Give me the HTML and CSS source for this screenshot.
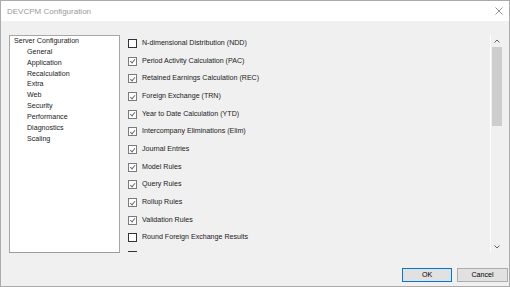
FILE: index.html
```html
<!DOCTYPE html>
<html lang="en">

<head>
    <meta charset="UTF-8">
    <title>DEVCPM Configuration</title>
    <link rel="stylesheet" href="styles.css">
</head>

<body>
    <div class="window">
        <div class="title-bar">
            <span class="title">DEVCPM Configuration</span>
            <svg class="close" width="8" height="8" viewBox="0 0 8 8">
                <path d="M0.5 0.5 L7.5 7.5 M7.5 0.5 L0.5 7.5" stroke="#8a8a8a" stroke-width="0.9" fill="none"/>
            </svg>
        </div>

        <div class="content">
            <div class="main">
                <ul class="tree">
                    <li class="root">Server Configuration</li>
                    <li>General</li>
                    <li>Application</li>
                    <li>Recalculation</li>
                    <li>Extra</li>
                    <li>Web</li>
                    <li>Security</li>
                    <li>Performance</li>
                    <li>Diagnostics</li>
                    <li>Scaling</li>
                </ul>

                <div class="panel">
                    <div class="options">
                        <label class="option"><span class="box"></span>N-dimensional Distribution (NDD)</label>
                        <label class="option"><span class="box checked"></span>Period Activity Calculation (PAC)</label>
                        <label class="option"><span class="box checked"></span>Retained Earnings Calculation (REC)</label>
                        <label class="option"><span class="box checked"></span>Foreign Exchange (TRN)</label>
                        <label class="option"><span class="box checked"></span>Year to Date Calculation (YTD)</label>
                        <label class="option"><span class="box checked"></span>Intercompany Eliminations (Elim)</label>
                        <label class="option"><span class="box checked"></span>Journal Entries</label>
                        <label class="option"><span class="box checked"></span>Model Rules</label>
                        <label class="option"><span class="box checked"></span>Query Rules</label>
                        <label class="option"><span class="box checked"></span>Rollup Rules</label>
                        <label class="option"><span class="box checked"></span>Validation Rules</label>
                        <label class="option"><span class="box"></span>Round Foreign Exchange Results</label>
                        <label class="option"><span class="box"></span>Use Cell Text</label>
                    </div>

                    <div class="scrollbar">
                        <svg class="arrow" width="6" height="4" viewBox="0 0 6 4">
                            <path d="M0.5 3.5 L3 1 L5.5 3.5" stroke="#606060" stroke-width="1" fill="none"/>
                        </svg>
                        <div class="track">
                            <div class="thumb"></div>
                        </div>
                        <svg class="arrow" width="6" height="4" viewBox="0 0 6 4">
                            <path d="M0.5 0.5 L3 3 L5.5 0.5" stroke="#606060" stroke-width="1" fill="none"/>
                        </svg>
                    </div>
                </div>
            </div>

            <div class="buttons">
                <button class="btn default">OK</button>
                <button class="btn">Cancel</button>
            </div>
        </div>
    </div>
</body>
</html>
```

FILE: styles.css
```css
* {
    box-sizing: border-box;
}

body {
    margin: 0;
    background-color: #fff;
    font-family: 'Liberation Sans', Arial, sans-serif;
    font-size: 7.1px;
    color: #1a1a1a;
}

.window {
    width: 510px;
    height: 287px;
    border: 1px solid #ababab;
    display: flex;
    flex-direction: column;
    background-color: #f0f0f0;
}

.title-bar {
    height: 20px;
    flex: none;
    display: flex;
    align-items: center;
    justify-content: space-between;
    padding: 0 6px 0 6px;
    background-color: #fff;
}

.title {
    font-size: 8px;
    color: #9a9a9a;
}

.content {
    flex: 1;
    display: flex;
    flex-direction: column;
}

.main {
    display: flex;
    padding: 14px 6px 0 8px;
    height: 232px;
}

.tree {
    width: 111px;
    height: 218px;
    margin: 0;
    padding: 0 0 0 4px;
    list-style: none;
    background-color: #fff;
    border: 1px solid #a6a6a6;
    border-bottom-color: #9a9a9a;
}

.tree li {
    height: 10.85px;
    line-height: 10.85px;
    padding-left: 13px;
    white-space: nowrap;
}

.tree li.root {
    padding-left: 0;
}

.panel {
    flex: 1;
    margin-left: 4px;
    height: 218px;
    display: flex;
}

.options {
    flex: 1;
    height: 217px;
    overflow: hidden;
    padding-left: 4px;
    border-right: 1px solid #fff;
}

.option {
    display: flex;
    align-items: center;
    height: 17.7px;
    white-space: nowrap;
}

.option:first-child {
    margin-top: -1px;
}

.box {
    width: 9px;
    height: 9px;
    margin: 1px 5px 0 0;
    border: 1px solid #333;
    background-color: #fff;
    position: relative;
}

.box.checked {
    border-color: #7a7a7a;
}

.box.checked::after {
    content: '';
    position: absolute;
    left: 2.3px;
    top: 0.6px;
    width: 2px;
    height: 4.4px;
    border: solid #6a6a6a;
    border-width: 0 1px 1px 0;
    transform: rotate(40deg);
}

.scrollbar {
    width: 12px;
    display: flex;
    flex-direction: column;
    align-items: center;
}

.arrow {
    flex: none;
    margin: 4px 0 4px 0;
}

.track {
    flex: 1;
    width: 100%;
    padding: 0 1px;
}

.thumb {
    height: 79px;
    background-color: #cdcdcd;
}

.buttons {
    display: flex;
    justify-content: flex-end;
    gap: 5px;
    padding: 15px 1px 0 0;
}

.btn {
    height: 14px;
    width: 50px;
    padding: 0;
    font-family: inherit;
    font-size: 7.1px;
    color: #000;
    background-color: #e1e1e1;
    border: 1px solid #adadad;
}

.btn.default {
    border-color: #0078d7;
}

.btn:last-child {
    width: 51px;
}
```
